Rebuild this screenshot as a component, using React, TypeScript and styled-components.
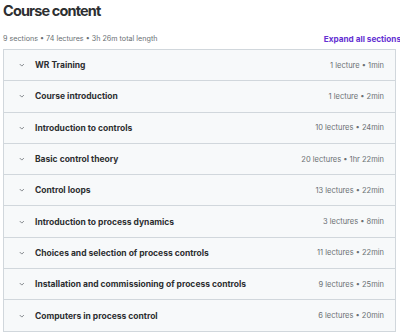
import React from 'react';
import styled, {createGlobalStyle} from 'styled-components';

const GlobalStyle = createGlobalStyle`
  html, body {
    margin: 0;
    padding: 0;
    background: #ffffff;
    font-family: Inter, "Liberation Sans", sans-serif;
    color: #2d2f31;
  }
`;

const Page = styled.div`
  width: 400px;
  height: 333px;
  overflow: hidden;
  padding: 0 3px;
  box-sizing: border-box;
`;

const Title = styled.h2`
  margin: 0;
  padding-top: 1px;
  font-size: 14.5px;
  font-weight: 700;
  line-height: 20px;
  letter-spacing: -0.85px;
`;

const SummaryRow = styled.div`
  display: flex;
  align-items: center;
  justify-content: space-between;
  margin-top: 12px;
  height: 11px;
  margin-bottom: 5px;
`;

const Summary = styled.span`
  font-size: 7.2px;
  color: #6a6f73;
`;

const ExpandLink = styled.button`
  border: none;
  background: none;
  padding: 0;
  margin-right: -4px;
  font-family: inherit;
  font-size: 8.2px;
  font-weight: 700;
  color: #6431d2;
  cursor: pointer;
  white-space: nowrap;
`;

const Table = styled.div`
  border: 1px solid #d1d7dc;
  border-bottom: none;
  width: 393px;
  box-sizing: border-box;
`;

const Row = styled.div`
  display: flex;
  align-items: center;
  height: 31.3px;
  box-sizing: border-box;
  background: #f7f9fa;
  border-bottom: 1px solid #d1d7dc;
  padding: 0 11px 0 13px;
`;

const Chevron = styled.svg`
  width: 8px;
  height: 8px;
  flex-shrink: 0;
  margin-right: 10px;
`;

const SectionTitle = styled.span`
  font-size: 8.5px;
  font-weight: 700;
  color: #2d2f31;
  flex: 1;
`;

const Meta = styled.span`
  font-size: 7.5px;
  color: #6a6f73;
  white-space: nowrap;
`;

const sections: [string, string][] = [
    ['WR Training', '1 lecture • 1min'],
    ['Course introduction', '1 lecture • 2min'],
    ['Introduction to controls', '10 lectures • 24min'],
    ['Basic control theory', '20 lectures • 1hr 22min'],
    ['Control loops', '13 lectures • 22min'],
    ['Introduction to process dynamics', '3 lectures • 8min'],
    ['Choices and selection of process controls', '11 lectures • 22min'],
    ['Installation and commissioning of process controls', '9 lectures • 25min'],
    ['Computers in process control', '6 lectures • 20min'],
];

const App: React.FC = () => {
    return (
        <Page>
            <GlobalStyle/>
            <Title>Course content</Title>
            <SummaryRow>
                <Summary>9 sections • 74 lectures • 3h 26m total length</Summary>
                <ExpandLink type="button">Expand all sections</ExpandLink>
            </SummaryRow>
            <Table>
                {sections.map(([title, meta]) => (
                    <Row key={title}>
                        <Chevron viewBox="0 0 8 8">
                            <path d="M3 3.3l1.8 1.8 1.8-1.8" fill="none" stroke="#6a6f73" strokeWidth="0.8"
                                  strokeLinecap="round" strokeLinejoin="round"/>
                        </Chevron>
                        <SectionTitle>{title}</SectionTitle>
                        <Meta>{meta}</Meta>
                    </Row>
                ))}
            </Table>
        </Page>
    );
};

export default App;
